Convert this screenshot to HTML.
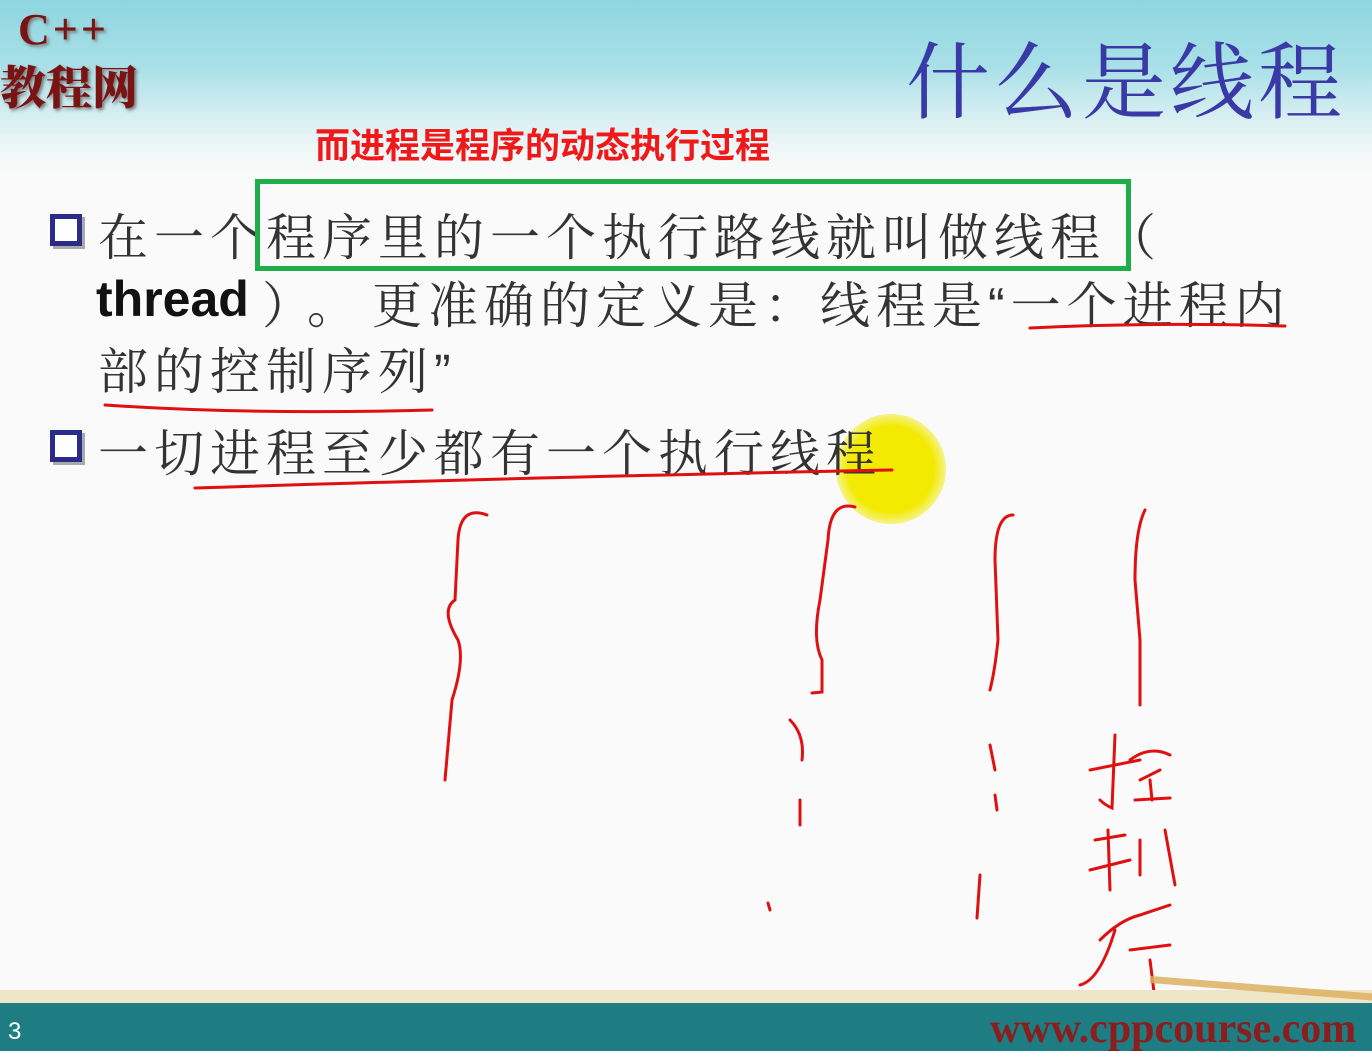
<!DOCTYPE html>
<html><head><meta charset="utf-8"><style>
body{margin:0;width:1372px;height:1051px;overflow:hidden;position:relative;background:#fafafa;font-family:"Liberation Sans","Noto Sans CJK SC",sans-serif}
.top{position:absolute;left:0;top:0;width:1372px;height:190px;background:linear-gradient(180deg,#8ed6df 0%,#a9e0e8 35%,#d8eff2 62%,#f6f9f9 85%,#fafafa 100%)}
.abs{position:absolute;white-space:nowrap}
.logo{font-family:"Liberation Serif","Noto Serif CJK SC",serif;font-weight:900;color:#7a1414;text-shadow:2px 2px 3px #777}
.t{font-family:"Liberation Serif","Noto Serif CJK SC",serif;color:#3a3aa6;font-size:84px;letter-spacing:4px}
.l{font-family:"Liberation Sans","Noto Serif CJK SC",serif;color:#333;font-size:50px;letter-spacing:6px}
.box{position:absolute;width:22px;height:22px;border:5px solid #2b2b8a;background:#fff;box-shadow:3px 3px 0 #aaa}
.band1{position:absolute;left:0;top:990px;width:1372px;height:13px;background:#efe6c8}
.band2{position:absolute;left:0;top:1003px;width:1372px;height:48px;background:#1e7d82}
</style></head><body>
<div class="top"></div>
<div class="abs logo" style="left:18px;top:4px;font-size:44px;letter-spacing:3px">C++</div>
<div class="abs logo" style="left:0;top:52px;font-size:46px">教程网</div>
<div class="abs t" style="left:906px;top:16px">什么是线程</div>
<div class="abs" style="left:315px;top:118px;font-size:35px;font-weight:bold;color:#f01818">而进程是程序的动态执行过程</div>
<div style="position:absolute;left:836px;top:414px;width:110px;height:110px;border-radius:50%;background:radial-gradient(circle,#f2ea00 55%,rgba(240,235,0,0.3) 75%,rgba(250,250,250,0) 100%)"></div>
<div class="box" style="left:50px;top:214px"></div>
<div class="abs l" style="left:98px;top:198px">在一个程序里的一个执行路线就叫做线程（</div>
<div class="abs l" style="left:96px;top:270px;letter-spacing:0;font-weight:bold"><span style="color:#111">thread</span></div>
<div class="abs l" style="left:262px;top:266px;letter-spacing:20px">）。</div>
<div class="abs l" style="left:372px;top:266px">更准确的定义是：线程是“一个进程内</div>
<div class="abs l" style="left:98px;top:332px">部的控制序列”</div>
<div class="box" style="left:50px;top:430px"></div>
<div class="abs l" style="left:98px;top:414px">一切进程至少都有一个执行线程</div>
<div style="position:absolute;left:255px;top:179px;width:866px;height:82px;border:5px solid #1fad4a"></div>
<svg style="position:absolute;left:0;top:0" width="1372" height="1051" fill="none" stroke="#e01010" stroke-width="3" stroke-linecap="round">
<path d="M1030 328 Q1150 322 1285 326"/>
<path d="M105 405 Q250 415 432 410"/>
<path d="M195 488 Q500 478 892 470"/>
<path d="M487 515 Q460 505 458 540 L455 600 Q440 610 458 640 Q465 660 452 700 L445 780"/>
<path d="M855 507 Q830 500 828 540 L820 600 Q812 640 822 660 L822 692 L812 693"/>
<path d="M790 720 Q805 735 802 760 M800 800 L800 825 M768 903 L770 910"/>
<path d="M1013 515 Q995 515 995 560 L998 640 Q995 670 990 690 M990 745 L995 770 M995 795 L997 810 M980 875 L977 918"/>
<path d="M1145 510 Q1135 530 1135 580 L1140 640 L1140 705"/>
<path d="M1090 770 L1140 760 M1115 735 L1112 808 Q1105 805 1100 800 M1130 760 Q1150 745 1170 755 M1140 780 L1160 770 M1135 800 L1170 798 M1150 780 L1152 800"/>
<path d="M1095 840 L1125 835 M1108 830 L1110 890 M1090 870 L1130 860 M1140 840 L1140 875 M1165 830 L1175 885"/>
<path d="M1100 940 Q1120 920 1140 915 L1170 905 M1115 930 Q1100 980 1080 985 M1130 950 L1170 945 M1150 960 L1155 1000 M1125 1010 Q1145 990 1190 1030 M1125 1010 L1115 1030"/>
</svg>
<div class="band1"></div>
<div class="band2"></div>
<div style="position:absolute;left:1150px;top:976px;width:225px;height:7px;background:#dcb060;transform:rotate(4.5deg);transform-origin:left;opacity:.85"></div>
<div class="abs" style="left:8px;top:1018px;color:#fff;font-size:24px">3</div>
<div class="abs" style="left:990px;top:1005px;font-family:'Liberation Serif',serif;font-weight:bold;font-size:42px;color:#8a1e1e">www.cppcourse.com</div>
</body></html>
